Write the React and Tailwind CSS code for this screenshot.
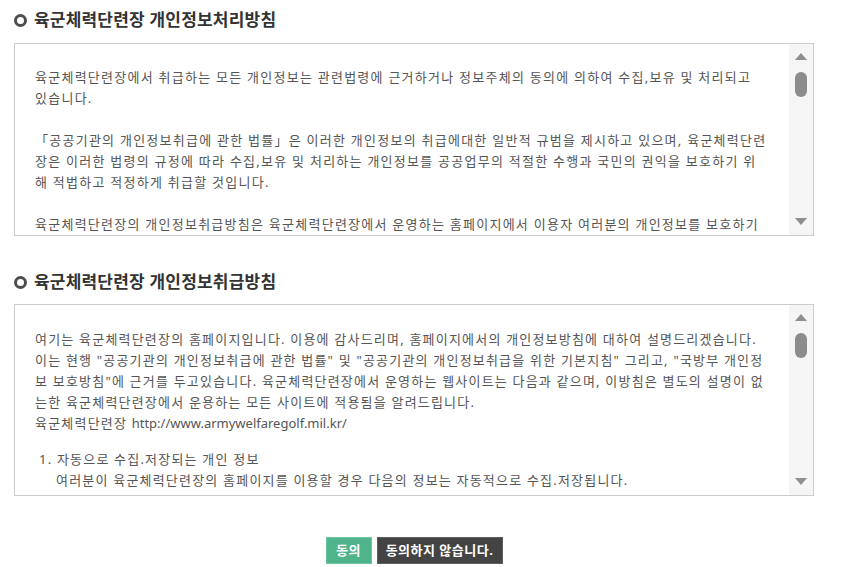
import React from 'react';

const font = { fontFamily: '"Noto Sans", "Noto Sans CJK KR", sans-serif' };

const policyLines = [
  ['육군체력단련장에서 취급하는 모든 개인정보는 관련법령에 근거하거나 정보주체의 동의에 의하여 수집,보유 및 처리되고', '있습니다.'],
  [
    '「공공기관의 개인정보취급에 관한 법률」은 이러한 개인정보의 취급에대한 일반적 규범을 제시하고 있으며, 육군체력단련',
    '장은 이러한 법령의 규정에 따라 수집,보유 및 처리하는 개인정보를 공공업무의 적절한 수행과 국민의 권익을 보호하기 위',
    '해 적법하고 적정하게 취급할 것입니다.',
  ],
  ['육군체력단련장의 개인정보취급방침은 육군체력단련장에서 운영하는 홈페이지에서 이용자 여러분의 개인정보를 보호하기'],
];

const handlingLines = [
  '여기는 육군체력단련장의 홈페이지입니다. 이용에 감사드리며, 홈페이지에서의 개인정보방침에 대하여 설명드리겠습니다.',
  '이는 현행 "공공기관의 개인정보취급에 관한 법률" 및 "공공기관의 개인정보취급을 위한 기본지침" 그리고, "국방부 개인정',
  '보 보호방침"에 근거를 두고있습니다. 육군체력단련장에서 운영하는 웹사이트는 다음과 같으며, 이방침은 별도의 설명이 없',
  '는한 육군체력단련장에서 운용하는 모든 사이트에 적용됨을 알려드립니다.',
];

const Title = ({ children, className }) => (
  <div className={`flex items-center h-[22px] ${className}`}>
    <span className="w-[13px] h-[13px] rounded-full border-[3px] border-[#4d4d4d] mr-[7px]" />
    <h2 className="text-[17px] font-bold text-[#333333] tracking-[0.2px]">{children}</h2>
  </div>
);

const FakeScrollbar = () => (
  <div className="w-[24px] shrink-0 bg-[#f5f5f5] flex flex-col items-center pt-[9px] pb-[10px]">
    <div className="w-0 h-0 border-l-[6px] border-r-[6px] border-b-[7px] border-l-transparent border-r-transparent border-b-[#8f8f8f]" />
    <div className="w-[12px] h-[25px] rounded-full bg-[#8c8c8c] mt-[12px]" />
    <div className="flex-1" />
    <div className="w-0 h-0 border-l-[6px] border-r-[6px] border-t-[7px] border-l-transparent border-r-transparent border-t-[#8f8f8f]" />
  </div>
);

const Line = ({ children }) => <div className="whitespace-nowrap">{children}</div>;

export default function App() {
  return (
    <div className="bg-white w-[844px] h-[567px] overflow-hidden" style={font}>
      <div className="w-[800px] ml-[14px]">
        <Title className="mt-[9px]">육군체력단련장 개인정보처리방침</Title>

        <div className="mt-[12px] h-[193px] border border-[#cccccc] flex">
          <div className="flex-1 overflow-hidden pl-[20px] pt-[23px] text-[13px] leading-[21px] tracking-[1.25px] text-[#555555]">
            {policyLines.map((para, i) => (
              <div key={i} className="mb-[21px]">
                {para.map((l, j) => (
                  <Line key={j}>{l}</Line>
                ))}
              </div>
            ))}
          </div>
          <FakeScrollbar />
        </div>

        <Title className="mt-[35px]">육군체력단련장 개인정보취급방침</Title>

        <div className="mt-[11px] h-[192px] border border-[#cccccc] flex">
          <div className="flex-1 overflow-hidden pl-[20px] pt-[24px] text-[13px] leading-[21px] tracking-[1.2px] text-[#555555]">
            {handlingLines.map((l, i) => (
              <Line key={i}>{l}</Line>
            ))}
            <Line>
              육군체력단련장 <span className="tracking-normal">http://www.armywelfaregolf.mil.kr/</span>
            </Line>
            <ol className="mt-[15px] pl-[4px]">
              <li>
                <Line>1. 자동으로 수집.저장되는 개인 정보</Line>
                <div className="pl-[17px]">
                  <Line>여러분이 육군체력단련장의 홈페이지를 이용할 경우 다음의 정보는 자동적으로 수집.저장됩니다.</Line>
                </div>
              </li>
            </ol>
          </div>
          <FakeScrollbar />
        </div>

        <div className="mt-[41px] flex justify-center gap-[5px]">
          <button className="h-[27px] w-[46px] bg-[#4fb38c] border border-[#6cc6a2] text-white text-[13px] font-bold tracking-[0.5px]">
            동의
          </button>
          <button className="h-[27px] w-[126px] bg-[#444444] border border-[#5f5f5f] text-white text-[13px] font-bold tracking-[0.5px]">
            동의하지 않습니다.
          </button>
        </div>
      </div>
    </div>
  );
}
